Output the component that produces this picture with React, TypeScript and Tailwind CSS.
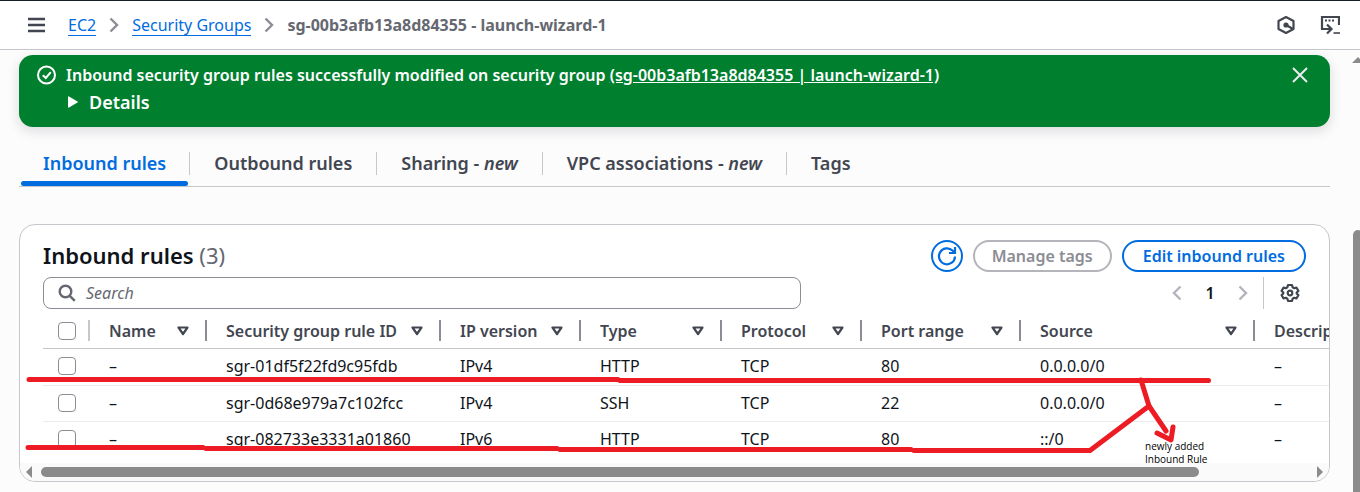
import { useState } from "react";

type Column = { label: string; width: string };
type Rule = {
  id: string;
  ip: string;
  type: string;
  protocol: string;
  port: string;
  source: string;
};

const columns: Column[] = [
  { label: "Name", width: "w-[117px]" },
  { label: "Security group rule ID", width: "w-[234px]" },
  { label: "IP version", width: "w-[140px]" },
  { label: "Type", width: "w-[141px]" },
  { label: "Protocol", width: "w-[140px]" },
  { label: "Port range", width: "w-[159px]" },
  { label: "Source", width: "w-[234px]" },
];

const rules: Rule[] = [
  { id: "sgr-01df5f22fd9c95fdb", ip: "IPv4", type: "HTTP", protocol: "TCP", port: "80", source: "0.0.0.0/0" },
  { id: "sgr-0d68e979a7c102fcc", ip: "IPv4", type: "SSH", protocol: "TCP", port: "22", source: "0.0.0.0/0" },
  { id: "sgr-082733e3331a01860", ip: "IPv6", type: "HTTP", protocol: "TCP", port: "80", source: "::/0" },
];

const tabs = [
  { label: "Inbound rules", isNew: false },
  { label: "Outbound rules", isNew: false },
  { label: "Sharing", isNew: true },
  { label: "VPC associations", isNew: true },
  { label: "Tags", isNew: false },
];

function Chevron({ left = false, className }: { left?: boolean; className: string }) {
  return (
    <svg viewBox="0 0 10 16" className={className} fill="none" stroke="currentColor" strokeWidth="2.4" aria-hidden="true">
      <path d={left ? "M8.5 1.5 2 8l6.5 6.5" : "M1.5 1.5 8 8l-6.5 6.5"} />
    </svg>
  );
}

function Checkbox({ label }: { label: string }) {
  return (
    <input
      type="checkbox"
      aria-label={label}
      className="block size-[18px] appearance-none rounded-[4px] border border-[#8c8c94] bg-white checked:bg-[#006ce0]"
    />
  );
}

function TopBar() {
  return (
    <header className="flex h-[50px] items-center border-t border-b border-t-[#161d26] border-b-[#c6c6cd] bg-white pr-5 pl-7">
      <button type="button" aria-label="Open navigation" className="mr-[23px] text-[#424650]">
        <svg viewBox="0 0 17 16" className="h-4 w-[17px]" fill="none" stroke="currentColor" strokeWidth="2.4">
          <path d="M0 2h17M0 8h17M0 14h17" />
        </svg>
      </button>
      <nav aria-label="Breadcrumb" className="flex flex-1 items-center gap-[13px] text-base">
        <a href="#ec2" className="border-b border-[#006ce0] leading-5 text-[#006ce0]">EC2</a>
        <Chevron className="h-4 w-[10px] text-[#8c8c94]" />
        <a href="#groups" className="border-b border-[#006ce0] leading-5 text-[#006ce0]">Security Groups</a>
        <Chevron className="h-4 w-[10px] text-[#8c8c94]" />
        <span className="font-bold text-[#656871]">sg-00b3afb13a8d84355 - launch-wizard-1</span>
      </nav>
      <div className="flex items-center gap-[25px] text-[#424650]">
        <button type="button" aria-label="Assistant">
          <svg viewBox="0 0 18 20" className="h-5 w-[18px]" fill="none" stroke="currentColor" strokeWidth="2.2">
            <path d="M9 2l7.5 4v8L9 18l-7.500-4V6z" strokeLinejoin="round" />
            <circle cx="9" cy="10" r="2.600" fill="currentColor" stroke="none" />
            <path d="M9 10l7.500 4.200" />
          </svg>
        </button>
        <button type="button" aria-label="CloudShell">
          <svg viewBox="0 0 20 20" className="size-5" fill="none" stroke="currentColor" strokeWidth="2.2">
            <path d="M19 10V2H2v12h9" />
            <path d="M7 9.500l4.500 4.500L7 18.500" />
            <path d="M5 5.500h2M8.500 5.500h2M12 5.500h2" strokeWidth="1.800" />
            <path d="M13.500 18H20" strokeWidth="1.600" />
          </svg>
        </button>
      </div>
    </header>
  );
}

function SuccessBanner() {
  return (
    <section role="status" className="flex h-[72px] rounded-[14px] bg-[#00802f] pt-[10px] pr-[22px] pl-[18px] text-white shadow-[0_4px_12px_1px_#0f141a1f]">
      <svg viewBox="0 0 20 20" className="mr-[9px] size-5 shrink-0" fill="none" stroke="currentColor" strokeWidth="2" aria-hidden="true">
        <circle cx="9.500" cy="10" r="8.500" />
        <path d="M5.800 10.200l3 2.800 5-5.800" />
      </svg>
      <div className="flex-1 font-semibold">
        <p className="text-base leading-5">
          Inbound security group rules successfully modified on security group{" "}
          <a href="#sg" className="underline">(sg-00b3afb13a8d84355 | launch-wizard-1)</a>
        </p>
        <button type="button" className="mt-[5px] flex items-center gap-[11px] text-lg leading-6">
          <svg viewBox="0 0 10 12" className="ml-[2px] h-3 w-[10px]" fill="currentColor" aria-hidden="true">
            <path d="M0 1q0-1 1-.600l8.500 5q.700.600 0 1.200l-8.500 5q-1 .400-1-.600z" />
          </svg>
          Details
        </button>
      </div>
      <button type="button" aria-label="Dismiss" className="mt-[2px] size-4 text-[#ebebf0]">
        <svg viewBox="0 0 16 16" className="size-4" fill="none" stroke="currentColor" strokeWidth="2">
          <path d="M1 1l14 14M15 1L1 15" />
        </svg>
      </button>
    </section>
  );
}

function Tabs() {
  const [active, setActive] = useState(0);
  return (
    <div role="tablist" className="mt-4 flex h-11 items-stretch border-b border-[#c6c6cd] text-lg leading-6 font-semibold">
      {tabs.map((tab, i) => (
        <div key={tab.label} className="flex">
          {i > 0 && <span className="mt-[9px] h-[23px] w-px bg-[#c6c6cd]" />}
          <button
            type="button"
            role="tab"
            aria-selected={i === active}
            onClick={() => setActive(i)}
            className={
              i === active
                ? "mr-[1px] ml-[2px] flex flex-col justify-between px-[22px] pt-2 text-[#006ce0]"
                : "flex flex-col justify-between px-6 pt-2 text-[#424650]"
            }
          >
            <span className="whitespace-nowrap">
              {tab.label}
              {tab.isNew && <> - <em>new</em></>}
            </span>
            {i === active && <span className="-mx-[22px] h-[5px] self-stretch rounded-sm bg-[#006ce0]" />}
          </button>
        </div>
      ))}
    </div>
  );
}

function CardHeader() {
  return (
    <div className="px-[23px] pt-[15px]">
      <div className="flex h-8 items-start justify-between">
        <h2 className="text-[22px] leading-[30px] font-semibold text-[#0f141a]">
          Inbound rules <span className="font-normal text-[#656871]">(3)</span>
        </h2>
        <div className="flex items-center gap-[10px] text-base font-semibold">
          <button type="button" aria-label="Refresh" className="flex size-8 items-center justify-center rounded-full border-2 border-[#006ce0] text-[#006ce0]">
            <svg viewBox="0 0 20 20" className="size-5" fill="none" stroke="currentColor" strokeWidth="2.2">
              <path d="M18 10.500A8 8 0 1 1 15.500 4.500L17.500 6.500" />
              <path d="M18 1v6h-6" />
            </svg>
          </button>
          <button type="button" disabled className="h-8 rounded-full border-2 border-[#b4b4bb] px-[17px] leading-none text-[#8c8c94]">
            Manage tags
          </button>
          <button type="button" className="h-8 rounded-full border-2 border-[#006ce0] px-[19px] leading-none text-[#006ce0]">
            Edit inbound rules
          </button>
        </div>
      </div>
      <div className="mt-[5px] flex items-center justify-between">
        <label className="flex h-8 w-[758px] items-center gap-[10px] rounded-lg border border-[#8c8c94] bg-white pr-3 pl-[14px]">
          <svg viewBox="0 0 18 18" className="size-[18px] shrink-0 text-[#656871]" fill="none" stroke="currentColor" strokeWidth="2.400">
            <circle cx="7.500" cy="7.500" r="5.800" />
            <path d="M11.800 11.800l5 5" />
          </svg>
          <input
            type="search"
            aria-label="Search rules"
            placeholder="Search"
            className="w-full bg-transparent text-base outline-none placeholder:text-[#656871] placeholder:italic"
          />
        </label>
        <div className="flex h-8 items-center text-[#b4b4bb]">
          <button type="button" aria-label="Previous page"><Chevron left className="h-4 w-[10px]" /></button>
          <span className="w-14 text-center text-base font-semibold text-[#0f141a]">1</span>
          <button type="button" aria-label="Next page"><Chevron className="h-4 w-[10px]" /></button>
          <span className="mr-4 ml-[15px] h-8 w-px bg-[#c6c6cd]" />
          <button type="button" aria-label="Preferences" className="mr-[6px] text-[#424650]">
            <svg viewBox="0 0 20 20" className="size-5" fill="none" stroke="currentColor" strokeWidth="2.2">
              <path strokeLinejoin="round" d="M8 2h4l.600 2.300 1.600.900 2.200-.700 2 3.400-1.700 1.600v1.000l1.700 1.600-2 3.400-2.200-.700-1.600.900L12 18H8l-.600-2.300-1.600-.900-2.200.700-2-3.400 1.700-1.600v-1.000L1.600 7.900l2-3.400 2.200.700 1.600-.900z" />
              <circle cx="10" cy="10" r="2.300" />
            </svg>
          </button>
        </div>
      </div>
    </div>
  );
}

function RulesTable() {
  return (
    <div className="mt-1 ml-[23px] h-[150px] overflow-hidden">
      <table className="w-full min-w-[1420px] table-fixed border-separate border-spacing-0 text-left text-base whitespace-nowrap">
        <thead className="text-[#424650]">
          <tr>
            <th className="h-9 w-[47px] border-b border-[#c6c6cd] p-0">
              <span className="flex items-center justify-between pl-[15px]">
                <Checkbox label="Select all rules" />
                <span className="h-[21px] w-[2px] bg-[#c6c6cd]" />
              </span>
            </th>
            {columns.map((column) => (
              <th key={column.label} className={`${column.width} h-9 border-b border-[#c6c6cd] p-0 font-semibold`}>
                <span className="flex items-center pl-[19px]">
                  <span className="flex-1">{column.label}</span>
                  <svg viewBox="0 0 12 10" className="mr-4 h-[10px] w-3" fill="none" stroke="currentColor" strokeWidth="2.2" aria-hidden="true">
                    <path d="M1.500 1.500h9L6 8z" strokeLinejoin="round" />
                  </svg>
                  <span className="h-[21px] w-[2px] bg-[#8c8c94]" />
                </span>
              </th>
            ))}
            <th className="h-9 border-b border-[#c6c6cd] p-0 pl-[19px] font-semibold">Description</th>
          </tr>
        </thead>
        <tbody className="text-[#0f141a] [&>tr+tr>td]:border-t [&>tr+tr>td]:border-[#ebebf0]">
          {rules.map((rule) => (
            <tr key={rule.id}>
              <td className="h-9 p-0 pb-[2px] pl-[15px]"><Checkbox label={`Select ${rule.id}`} /></td>
              {["–", rule.id, rule.ip, rule.type, rule.protocol, rule.port, rule.source, "–"].map((value, i) => (
                <td key={i} className="h-9 p-0 pb-[2px] pl-[19px]">{value}</td>
              ))}
            </tr>
          ))}
        </tbody>
      </table>
    </div>
  );
}

function HorizontalScrollbar() {
  return (
    <div className="flex h-[18px] items-center bg-[#fafafa] px-[6px] text-[#8b8b8b]" aria-hidden="true">
      <svg viewBox="0 0 6 12" className="h-3 w-[6px]" fill="currentColor"><path d="M6 0v12L0 6z" /></svg>
      <div className="mr-[118px] ml-[9px] h-[10px] flex-1 rounded-full bg-[#8b8b8b]" />
      <svg viewBox="0 0 6 12" className="h-3 w-[6px]" fill="currentColor"><path d="M0 0v12l6-6z" /></svg>
    </div>
  );
}

function Annotation() {
  return (
    <div className="pointer-events-none absolute top-0 left-0">
      <svg viewBox="0 0 1360 492" className="h-[492px] w-[1360px]" fill="none" stroke="#ed1c24" strokeWidth="5" strokeLinecap="round" strokeLinejoin="round" aria-hidden="true">
        <path d="M29 379.500H618M620 380.500H1208.500" />
        <path d="M28 447.500H203M206 448.500H557M560 449.500H911M914 450.500H1090L1149 406" />
        <path d="M1141 380l8 26 17 25M1157 433l14 7 2-13" />
      </svg>
      <p className="absolute top-[440px] left-[1145px] font-['Open_Sans',sans-serif] text-[10px] leading-[13px] whitespace-nowrap text-black">
        newly added
        <br />
        Inbound Rule
      </p>
    </div>
  );
}

export default function App() {
  return (
    <div className="relative min-h-screen overflow-hidden bg-[#fcfcfd] font-['Noto_Sans',sans-serif]">
      <TopBar />
      <div className="flex">
        <main className="min-w-0 flex-1 pt-[5px] pr-[22px] pb-[10px] pl-[19px]">
          <SuccessBanner />
          <Tabs />
          <section className="mt-[37px] overflow-hidden rounded-2xl border border-[#c6c6cd] bg-white">
            <CardHeader />
            <RulesTable />
            <HorizontalScrollbar />
          </section>
        </main>
        <div className="flex w-2 flex-col overflow-hidden text-[#8b8b8b]" aria-hidden="true">
          <svg viewBox="0 0 12 6" className="mt-[7px] h-[6px] w-3 shrink-0" fill="currentColor"><path d="M6 0l6 6H0z" /></svg>
          <div className="mt-[167px] ml-[1px] w-[10px] flex-1 rounded-t-full bg-[#8b8b8b]" />
        </div>
      </div>
      <Annotation />
    </div>
  );
}
